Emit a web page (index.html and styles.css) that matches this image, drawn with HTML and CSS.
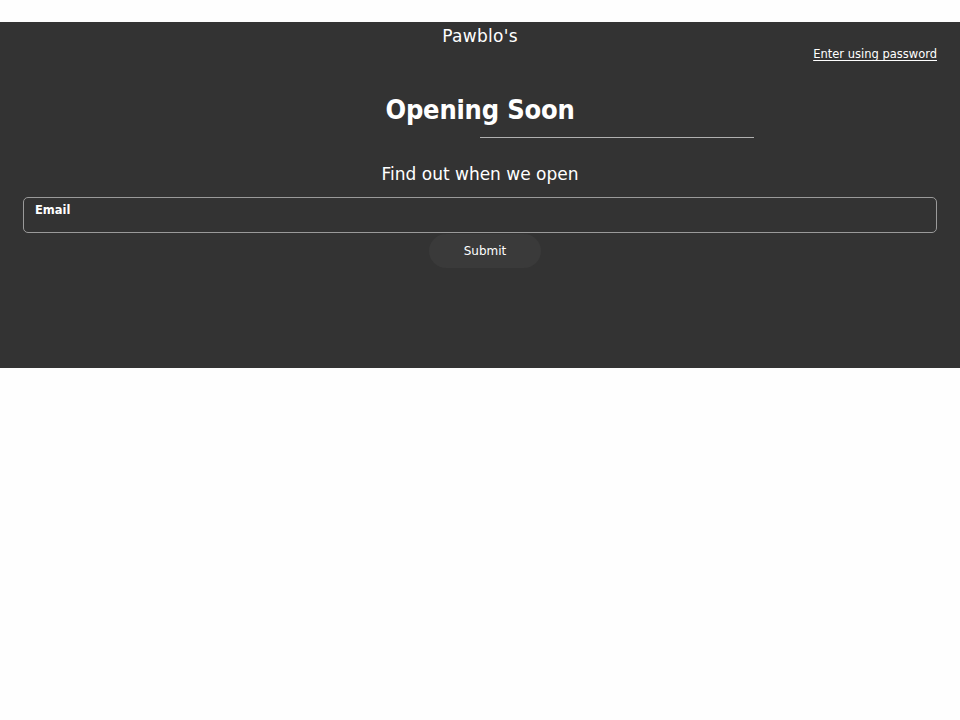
FILE: index.html
```html
<!DOCTYPE html>
<html>
<head>
<meta charset="utf-8">
<link rel="stylesheet" href="styles.css">
</head>
<body>
<div class="topgap"></div>
<main class="band">
  <header class="head">
    <div class="brand">Pawblo's</div>
    <div class="pwrow"><a class="pw" href="#">Enter using password</a></div>
  </header>
  <h1 class="title">Opening Soon</h1>
  <div class="rule-row"><div class="rule"></div></div>
  <h2 class="sub">Find out when we open</h2>
  <form class="form">
    <label class="field"><span class="label">Email</span></label>
    <button class="submit" type="button">Submit</button>
  </form>
</main>
</body>
</html>
```
FILE: styles.css
```css
html, body { margin: 0; padding: 0; background: #fefefe; }
body { font-family: "DejaVu Sans", "Liberation Sans", sans-serif; color: #fff; }
.topgap { height: 22px; }
.band { background: #333333; height: 346px; box-sizing: border-box; padding: 0 23px; }
.head { height: 52px; }
.brand { text-align: center; font-size: 17px; padding-top: 3px; line-height: 22px; letter-spacing: 0.3px; }
.pwrow { display: flex; justify-content: flex-end; margin-top: -1px; }
.pw { color: #fff; font-size: 11.5px; text-decoration: underline; text-underline-offset: 2px; line-height: 16px; }
.title { margin: 19px 0 0; text-align: center; font-family: "DejaVu Sans Condensed", "DejaVu Sans", sans-serif; font-size: 27px; font-weight: bold; line-height: 34px; letter-spacing: -0.2px; }
.rule-row { display: flex; justify-content: flex-start; padding-left: 457px; margin-top: 10px; }
.rule { width: 274px; height: 1px; background: #b0b0b0; }
.sub { margin: 24px 0 0; text-align: center; font-size: 17px; font-weight: normal; line-height: 24px; }
.form { margin-top: 11px; display: flex; flex-direction: column; align-items: center; }
.field { align-self: stretch; height: 36px; box-sizing: border-box; border: 1px solid #9a9a9a; border-radius: 5px; padding: 5px 11px; font-size: 11.5px; font-weight: bold; line-height: 14px; }
.submit { margin-top: 1px; margin-left: 10px; width: 112px; height: 34px; border: none; border-radius: 17px; background: #3a3a3a; color: #fff; font-family: inherit; font-size: 12px; font-weight: normal; padding: 0; }
```
